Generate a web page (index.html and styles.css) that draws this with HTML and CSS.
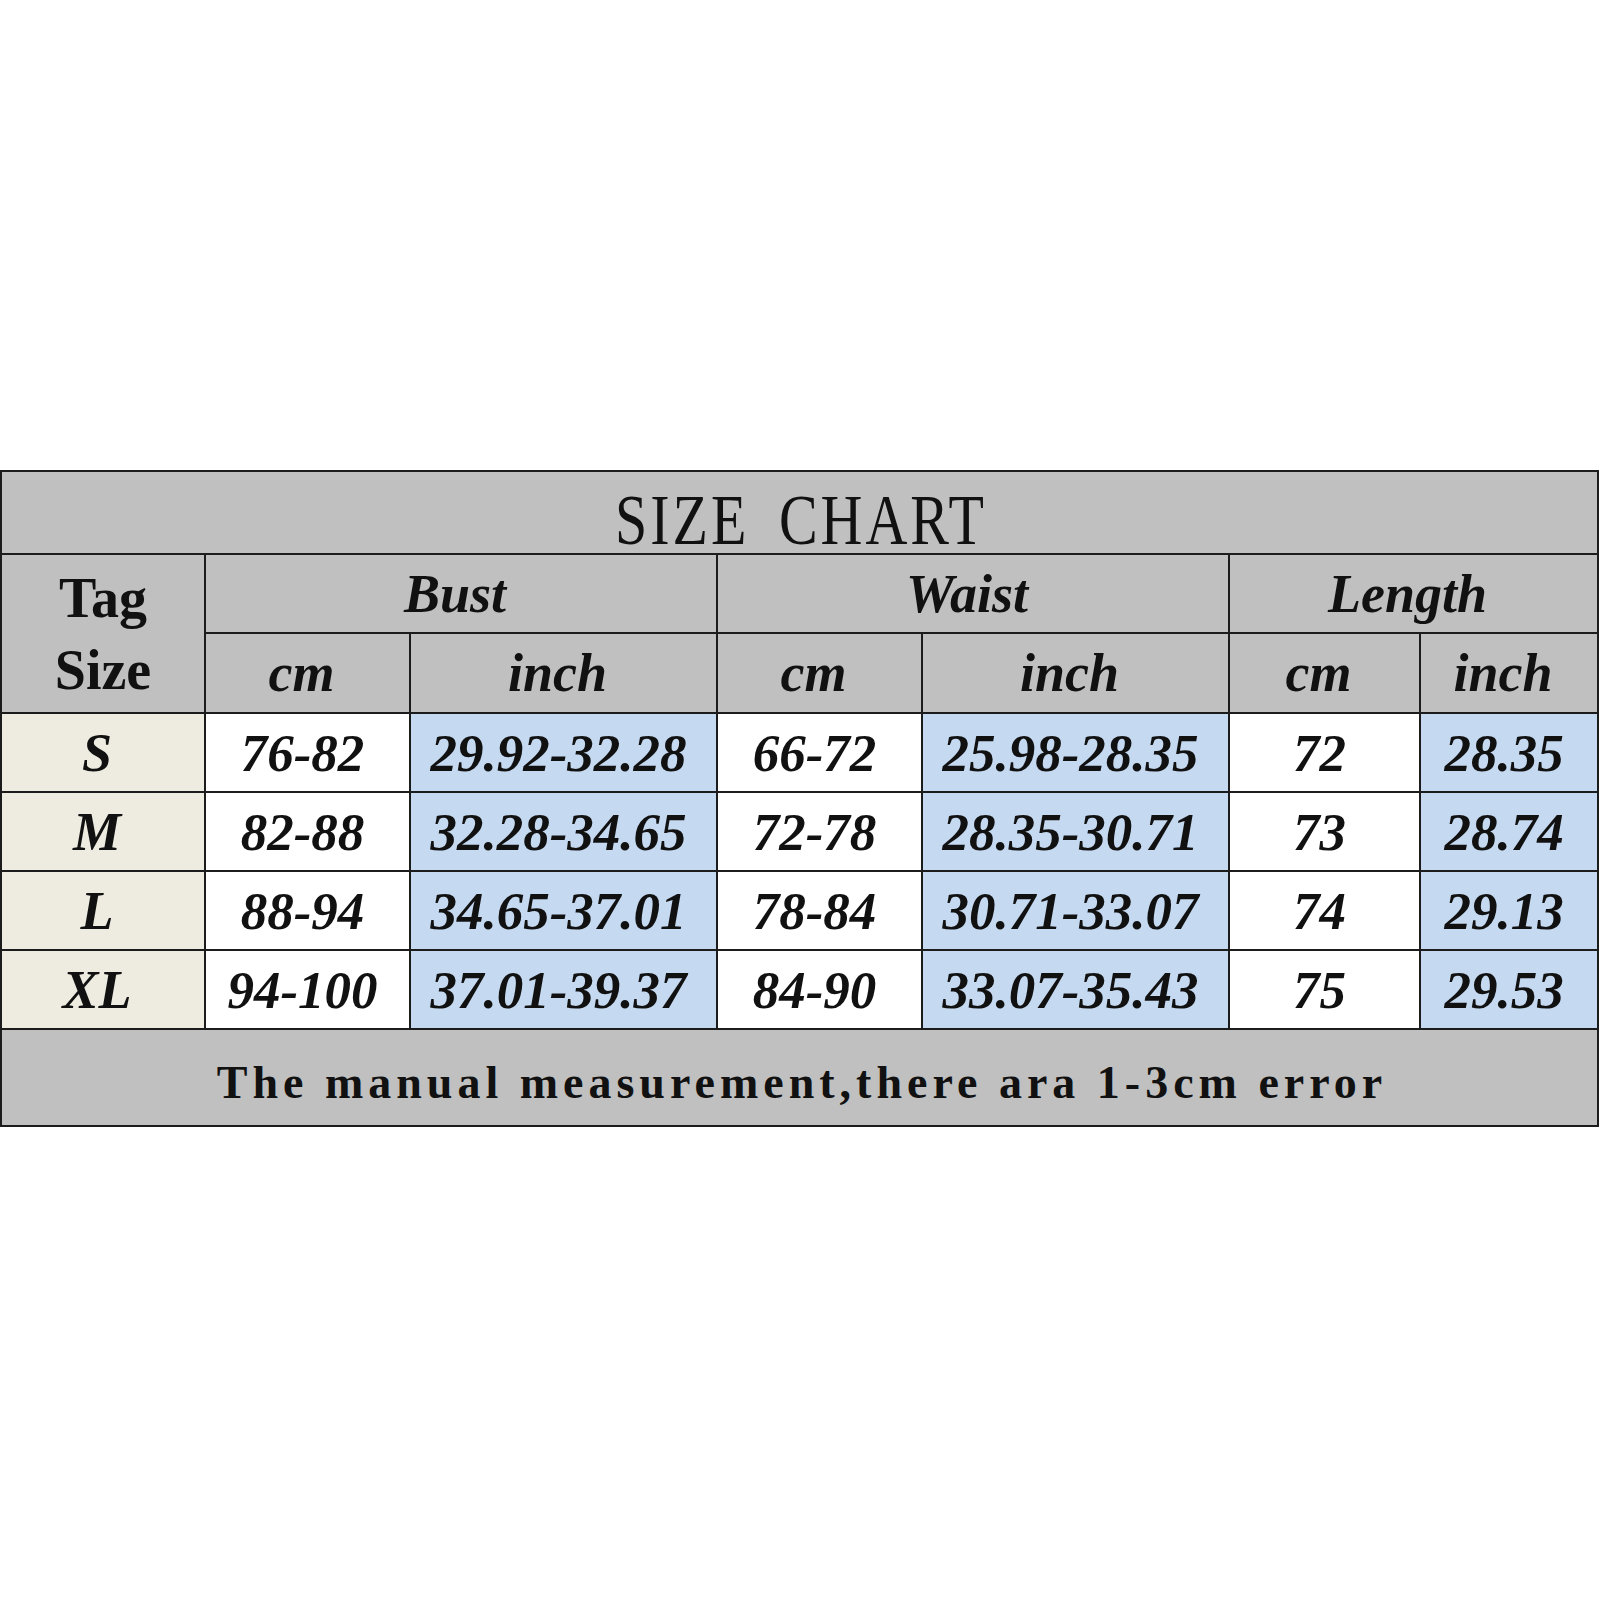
FILE: index.html
```html
<!DOCTYPE html>
<html>
<head>
<meta charset="utf-8">
<link rel="stylesheet" href="styles.css">
</head>
<body>
<div class="page">
<table class="chart">
  <colgroup>
    <col class="c-tag"><col class="c-cm"><col class="c-in"><col class="c-cm"><col class="c-in"><col class="c-lcm"><col class="c-lin">
  </colgroup>
  <tr class="r-title">
    <td colspan="7" class="title"><span class="title-text">SIZE CHART</span></td>
  </tr>
  <tr class="r-head">
    <td rowspan="2" class="tag-head">Tag<br>Size</td>
    <td colspan="2" class="head">Bust</td>
    <td colspan="2" class="head">Waist</td>
    <td colspan="2" class="head">Length</td>
  </tr>
  <tr class="r-head2">
    <td class="head">cm</td><td class="head">inch</td>
    <td class="head">cm</td><td class="head">inch</td>
    <td class="head">cm</td><td class="head">inch</td>
  </tr>
  <tr class="r-data">
    <td class="size">S</td><td class="cm">76-82</td><td class="in">29.92-32.28</td><td class="cm">66-72</td><td class="in">25.98-28.35</td><td class="cm">72</td><td class="in">28.35</td>
  </tr>
  <tr class="r-data">
    <td class="size">M</td><td class="cm">82-88</td><td class="in">32.28-34.65</td><td class="cm">72-78</td><td class="in">28.35-30.71</td><td class="cm">73</td><td class="in">28.74</td>
  </tr>
  <tr class="r-data">
    <td class="size">L</td><td class="cm">88-94</td><td class="in">34.65-37.01</td><td class="cm">78-84</td><td class="in">30.71-33.07</td><td class="cm">74</td><td class="in">29.13</td>
  </tr>
  <tr class="r-data">
    <td class="size">XL</td><td class="cm">94-100</td><td class="in">37.01-39.37</td><td class="cm">84-90</td><td class="in">33.07-35.43</td><td class="cm">75</td><td class="in">29.53</td>
  </tr>
  <tr class="r-foot">
    <td colspan="7" class="foot"><span class="foot-text">The manual measurement,there ara 1-3cm error</span></td>
  </tr>
</table>
</div>
</body>
</html>
```

FILE: styles.css
```css
html, body {
  margin: 0;
  padding: 0;
  background: #ffffff;
}

.page {
  width: 1600px;
  height: 1600px;
  padding-top: 470px;
  box-sizing: border-box;
}

.chart {
  width: 1599px;
  border-collapse: collapse;
  table-layout: fixed;
  color: #111111;
  border: 2px solid #2a2a2a;
}

.chart td {
  border: 2px solid #1c1c1c;
  padding: 0;
  text-align: center;
  vertical-align: middle;
  white-space: nowrap;
}

.c-tag { width: 204px; }
.c-cm { width: 205px; }
.c-in { width: 307px; }
.c-lcm { width: 191px; }
.c-lin { width: 178px; }

.r-title { height: 83px; }
.r-head { height: 79px; }
.r-head2 { height: 80px; }
.r-data { height: 79px; }
.r-foot { height: 97px; }

.title {
  background: #c0c0c0;
}

.title-text {
  display: inline-block;
  font-family: "Liberation Serif", serif;
  font-size: 58px;
  line-height: 58px;
  letter-spacing: 3px;
  word-spacing: 12px;
  transform: scaleY(1.25);
  padding-top: 12px;
  padding-left: 3px;
}

.tag-head {
  background: #c0c0c0;
  font-family: "Liberation Serif", serif;
  font-weight: bold;
  font-size: 56px;
  line-height: 72px;
}

.head {
  background: #c0c0c0;
  font-family: "Liberation Serif", serif;
  font-weight: bold;
  font-style: italic;
  font-size: 54px;
  padding-right: 12px !important;
}

.size {
  background: #eeece1;
  font-family: "Liberation Serif", serif;
  font-weight: bold;
  font-style: italic;
  font-size: 54px;
  padding-right: 12px !important;
}

.cm {
  background: #ffffff;
  font-family: "Liberation Serif", serif;
  font-weight: bold;
  font-style: italic;
  font-size: 53px;
  padding-right: 10px !important;
}

.in {
  background: #c5d9f1;
  font-family: "Liberation Serif", serif;
  font-weight: bold;
  font-style: italic;
  font-size: 53px;
  padding-right: 10px !important;
}

.foot {
  background: #c0c0c0;
}

.foot-text {
  display: inline-block;
  font-family: "Liberation Serif", serif;
  font-weight: bold;
  font-size: 46px;
  line-height: 46px;
  letter-spacing: 5px;
  padding-top: 10px;
  padding-left: 5px;
}
```
